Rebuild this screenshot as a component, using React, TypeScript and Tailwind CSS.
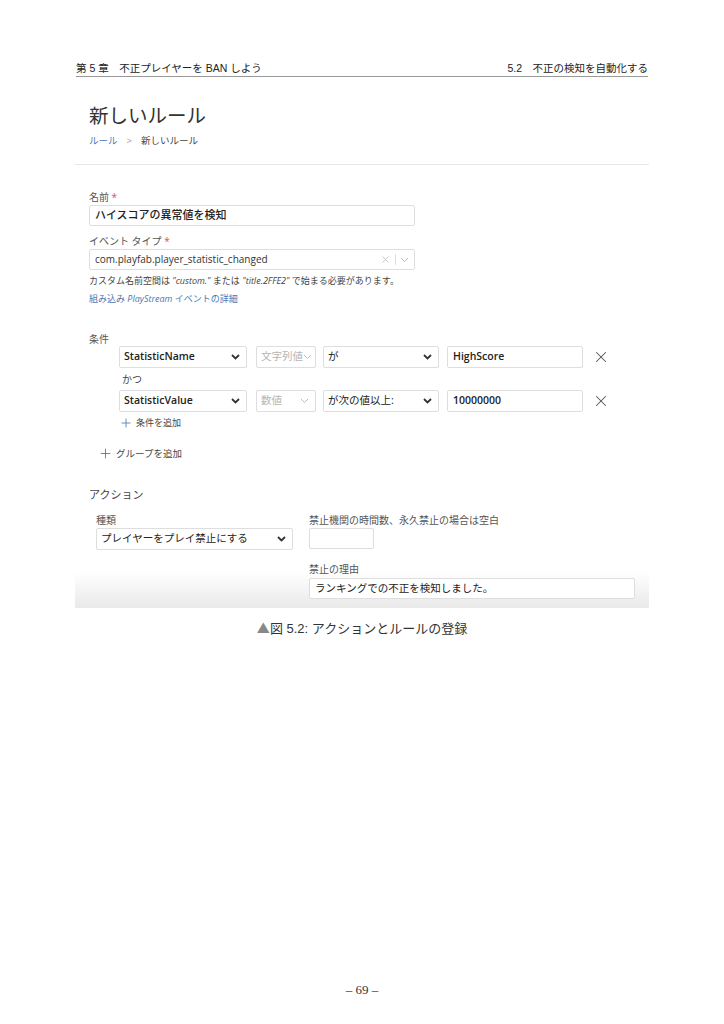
import { X, Plus } from "lucide-react";

const jp = { fontFamily: '"Noto Sans CJK JP", sans-serif' };
const ui = { fontFamily: '"Open Sans", "Noto Sans CJK JP", sans-serif' };
const book = { fontFamily: '"Liberation Sans", "Noto Sans CJK JP", sans-serif' };

const Chevron = ({ thin = false }: { thin?: boolean }) => (
	<svg width="9" height="6" viewBox="0 0 9 6" className="shrink-0">
		<path
			d="M1 1 L4.5 4.5 L8 1"
			fill="none"
			stroke={thin ? "#bbb" : "#333"}
			strokeWidth={thin ? 1 : 1.8}
		/>
	</svg>
);

const Select = ({
	value,
	className,
	muted = false,
	bold = false,
}: {
	value: string;
	className: string;
	muted?: boolean;
	bold?: boolean;
}) => (
	<div
		className={`flex items-center justify-between h-[22px] border border-[#dedede] rounded-[2px] bg-white pl-[4px] pr-[6px] text-[10.5px] ${
			muted ? "text-[#b5b5b5]" : "text-[#222]"
		} ${bold ? "font-semibold" : ""} ${className}`}
	>
		<span className="whitespace-nowrap">{value}</span>
		<Chevron thin={muted} />
	</div>
);

const Field = ({ value, className }: { value: string; className: string }) => (
	<div
		className={`flex items-center h-[21px] border border-[#dedede] rounded-[2px] bg-white px-[5px] text-[10.5px] text-[#222] ${className}`}
	>
		{value}
	</div>
);

const Label = ({ children, req = false }: { children: React.ReactNode; req?: boolean }) => (
	<div className="text-[10px] leading-[14px] text-[#555]">
		{children}
		{req && <span className="text-[#d9534f]"> *</span>}
	</div>
);

export default function App() {
	return (
		<div className="w-[724px] h-[1024px] bg-white relative" style={jp}>
			<div className="pt-[61px] px-[76px]" style={book}>
				<div className="flex justify-between text-[10.5px] leading-[14px] text-[#222] pb-[1px] border-b-[1.5px] border-[#999]">
					<span>第 5 章　不正プレイヤーを BAN しよう</span>
					<span>5.2　不正の検知を自動化する</span>
				</div>
			</div>

			{/* screenshot */}
			<div
				className="mx-[75px] mt-[13px] h-[518px] bg-[linear-gradient(to_bottom,#fff_93%,#e9e9e9)]"
				style={ui}
			>
				<div className="px-[14px] pt-[13px]">
					<div className="text-[19.5px] leading-[24px] text-[#333]" style={jp}>
						新しいルール
					</div>
					<div className="mt-[7px] flex items-center text-[9.5px] leading-[14px]">
						<span className="text-[#4a78b5]">ルール</span>
						<span className="mx-[9px] text-[#999]">&gt;</span>
						<span className="text-[#444]">新しいルール</span>
					</div>
				</div>
				<div className="mt-[16px] border-t border-[#e6e6e6]" />

				<div className="px-[14px]">
					<div className="mt-[25px]">
						<Label req>名前</Label>
					</div>
					<Field value="ハイスコアの異常値を検知" className="mt-[1px] w-[326px] font-medium text-[11px]" />

					<div className="mt-[8px]">
						<Label req>イベント タイプ</Label>
					</div>
					<div className="mt-[1px] w-[326px] h-[21px] flex items-center justify-between border border-[#dedede] rounded-[2px] px-[5px] text-[10px] text-[#333]">
						<span>com.playfab.player_statistic_changed</span>
						<span className="flex items-center gap-[4px] text-[#c4c4c4]">
							<X size={11} strokeWidth={2} />
							<span className="w-px h-[11px] bg-[#ddd]" />
							<Chevron thin />
						</span>
					</div>
					<div className="mt-[4px] text-[9px] leading-[14px] text-[#444]">
						カスタム名前空間は <i>"custom."</i> または <i>"title.2FFE2"</i> で始まる必要があります。
					</div>
					<div className="mt-[4px] text-[9px] leading-[14px] text-[#4a78b5]">
						組み込み <i>PlayStream</i> イベントの詳細
					</div>

					<div className="mt-[26px]">
						<Label>条件</Label>
					</div>
					<div className="pl-[30px]">
						<div className="flex items-center">
							<Select value="StatisticName" className="w-[128px]" bold />
							<Select value="文字列値" className="ml-[9px] w-[60px]" muted />
							<Select value="が" className="ml-[7px] w-[116px]" />
							<div className="ml-[8px] w-[136px] h-[22px] flex items-center border border-[#dedede] rounded-[2px] px-[5px] text-[10.5px] font-semibold text-[#222]">
								HighScore
							</div>
							<X size={18} strokeWidth={1.4} className="ml-[9px] text-[#555]" />
						</div>
						<div className="mt-[4px] pl-[3px] text-[10px] leading-[14px] text-[#444]">かつ</div>
						<div className="mt-[4px] flex items-center">
							<Select value="StatisticValue" className="w-[128px]" bold />
							<Select value="数値" className="ml-[9px] w-[60px]" muted />
							<Select value="が次の値以上:" className="ml-[7px] w-[116px]" />
							<div className="ml-[8px] w-[136px] h-[22px] flex items-center border border-[#dedede] rounded-[2px] px-[5px] text-[10.5px] font-semibold text-[#222]">
								10000000
							</div>
							<X size={18} strokeWidth={1.4} className="ml-[9px] text-[#555]" />
						</div>
						<div className="mt-[4px] flex items-center gap-[3px] text-[9px] leading-[14px] text-[#444]">
							<Plus size={14} strokeWidth={1.4} className="text-[#4a78b5]" />
							条件を追加
						</div>
					</div>
					<div className="mt-[16px] pl-[9px] flex items-center gap-[3px] text-[9.5px] leading-[14px] text-[#444]">
						<Plus size={15} strokeWidth={1.4} className="text-[#4a78b5]" />
						グループを追加
					</div>

					<div className="mt-[27px] text-[11px] leading-[14px] text-[#444]">アクション</div>
					<div className="mt-[11px] pl-[7px] flex">
						<div>
							<Label>種類</Label>
							<Select value="プレイヤーをプレイ禁止にする" className="mt-[1px] w-[197px] h-[21px]" />
						</div>
						<div className="ml-[16px]">
							<Label>禁止機関の時間数、永久禁止の場合は空白</Label>
							<Field value="" className="mt-[1px] w-[65px]" />
							<div className="mt-[13px]">
								<Label>禁止の理由</Label>
							</div>
							<Field value="ランキングでの不正を検知しました。" className="mt-[2px] w-[326px]" />
						</div>
					</div>
				</div>
			</div>

			<div className="mt-[11px] text-center text-[13px] leading-[18px] text-[#333]" style={book}>
				<span className="text-[#888]" style={jp}>▲</span>図 5.2: アクションとルールの登録
			</div>

			<div
				className="absolute left-0 right-0 top-[982px] text-center text-[13px] leading-[16px] text-[#333]"
				style={{ fontFamily: '"Liberation Serif", serif' }}
			>
				– 69 –
			</div>
		</div>
	);
}
